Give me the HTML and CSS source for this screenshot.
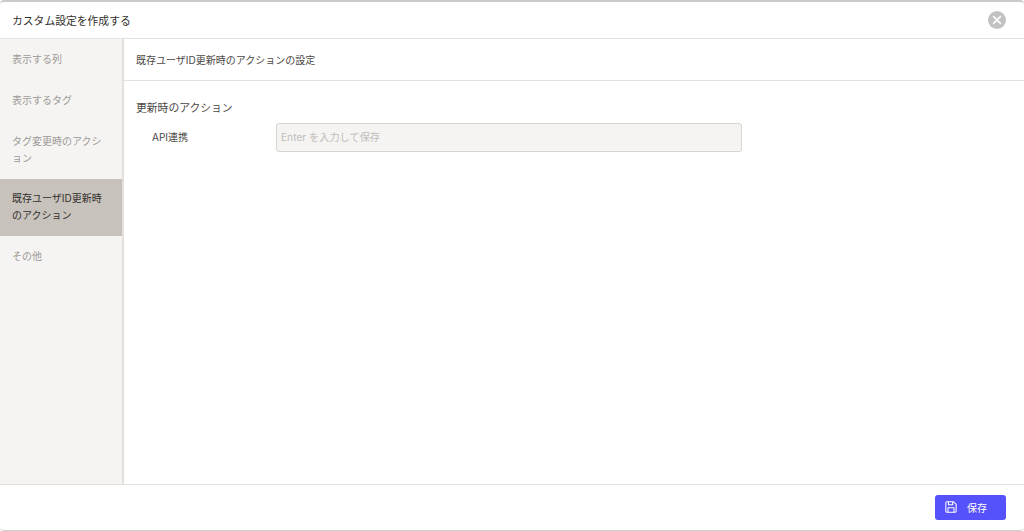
FILE: index.html
```html
<!DOCTYPE html>
<html lang="ja">
<head>
  <meta charset="UTF-8">
  <meta name="viewport" content="width=device-width, initial-scale=1.0">
  <title>カスタム設定を作成する</title>
  <link rel="stylesheet" href="styles.css">
</head>
<body>

<div class="modal">
  <header class="modal-header">
    <h1>カスタム設定を作成する</h1>
    <button class="close-btn" aria-label="閉じる">
      <svg width="18" height="18" viewBox="0 0 18 18">
        <circle cx="9" cy="9" r="9" fill="#c4c2c0"/>
        <path d="M5.6 5.6 12.4 12.4M12.4 5.6 5.6 12.4" stroke="#fff" stroke-width="1.5" stroke-linecap="round"/>
      </svg>
    </button>
  </header>

  <div class="modal-body">
    <nav class="side-nav">
      <a class="nav-item">表示する列</a>
      <a class="nav-item">表示するタグ</a>
      <a class="nav-item">タグ変更時のアクション</a>
      <a class="nav-item active">既存ユーザID更新時のアクション</a>
      <a class="nav-item">その他</a>
    </nav>

    <main class="content">
      <div class="content-title">既存ユーザID更新時のアクションの設定</div>
      <section class="section">
        <h2>更新時のアクション</h2>
        <div class="form-row">
          <label for="api">API連携</label>
          <input id="api" type="text" placeholder="Enter を入力して保存" disabled>
        </div>
      </section>
    </main>
  </div>

  <footer class="modal-footer">
    <button class="save-btn">
      <svg width="12" height="12" viewBox="0 0 14 14" fill="none" stroke="#fff" stroke-width="1.2" stroke-linejoin="round">
        <path d="M1 2a1 1 0 0 1 1-1h8l3 3v8a1 1 0 0 1-1 1H2a1 1 0 0 1-1-1z"/>
        <path d="M4 1v3.5h5V1"/>
        <path d="M3.5 13V8h7v5"/>
      </svg>
      <span>保存</span>
    </button>
  </footer>
</div>

</body>
</html>
```

FILE: styles.css
```css
* {
  box-sizing: border-box;
}

html, body {
  height: 100%;
}

body {
  margin: 0;
  background: #fff;
  color: #3d3a38;
  font-family: 'Inter', 'Noto Sans CJK JP', sans-serif;
  font-size: 10px;
  overflow: hidden;
}

.modal {
  height: 531px;
  display: flex;
  flex-direction: column;
  border-top: 2px solid #c9c9c9;
  border-bottom: 1px solid #d0d0d0;
  border-radius: 4px;
}

.modal-header {
  height: 37px;
  flex: none;
  display: flex;
  align-items: center;
  justify-content: space-between;
  padding: 0 18px 0 12px;
  border-bottom: 1px solid #e4e0dc;
}

.modal-header h1 {
  margin: 0;
  font-size: 10.8px;
  font-weight: 400;
  color: #33302e;
}

.close-btn {
  display: flex;
  padding: 0;
  border: none;
  background: none;
}

.modal-body {
  flex: 1;
  display: flex;
  min-height: 0;
}

.side-nav {
  width: 124px;
  flex: none;
  background: #f5f4f2;
  border-right: 2px solid #e4e0dc;
}

.nav-item {
  display: block;
  padding: 12px;
  line-height: 17px;
  color: #9c9997;
}

.nav-item.active {
  padding-top: 11px;
  background: #c7c2bb;
  color: #33302e;
}

.content {
  flex: 1;
  min-width: 0;
}

.content-title {
  height: 42px;
  display: flex;
  align-items: center;
  padding: 0 12px 1px;
  border-bottom: 1px solid #e4e0dc;
  color: #4b4845;
}

.section {
  padding: 19px 12px;
}

.section h2 {
  margin: 0 0 6px;
  font-size: 10.8px;
  line-height: 17px;
  font-weight: 400;
  color: #4b4845;
}

.form-row {
  display: flex;
  align-items: center;
}

.form-row label {
  width: 140px;
  padding: 0 0 2px 16px;
  color: #4b4845;
}

.form-row input {
  width: 466px;
  height: 29px;
  padding: 0 4px 2px;
  background: #f5f4f2;
  border: 1px solid #d8d4cf;
  border-radius: 3px;
  font: inherit;
  font-size: 10.2px;
}

.form-row input::placeholder {
  color: #c0bdba;
  opacity: 1;
}

.modal-footer {
  height: 46px;
  flex: none;
  display: flex;
  align-items: center;
  justify-content: flex-end;
  padding: 0 18px 1px 0;
  border-top: 1px solid #e4e0dc;
}

.save-btn {
  width: 71px;
  height: 25px;
  display: flex;
  align-items: center;
  gap: 10px;
  padding: 0 0 0 10px;
  border: none;
  border-radius: 3px;
  background: #5551fb;
  color: #fff;
  font: inherit;
}
```
